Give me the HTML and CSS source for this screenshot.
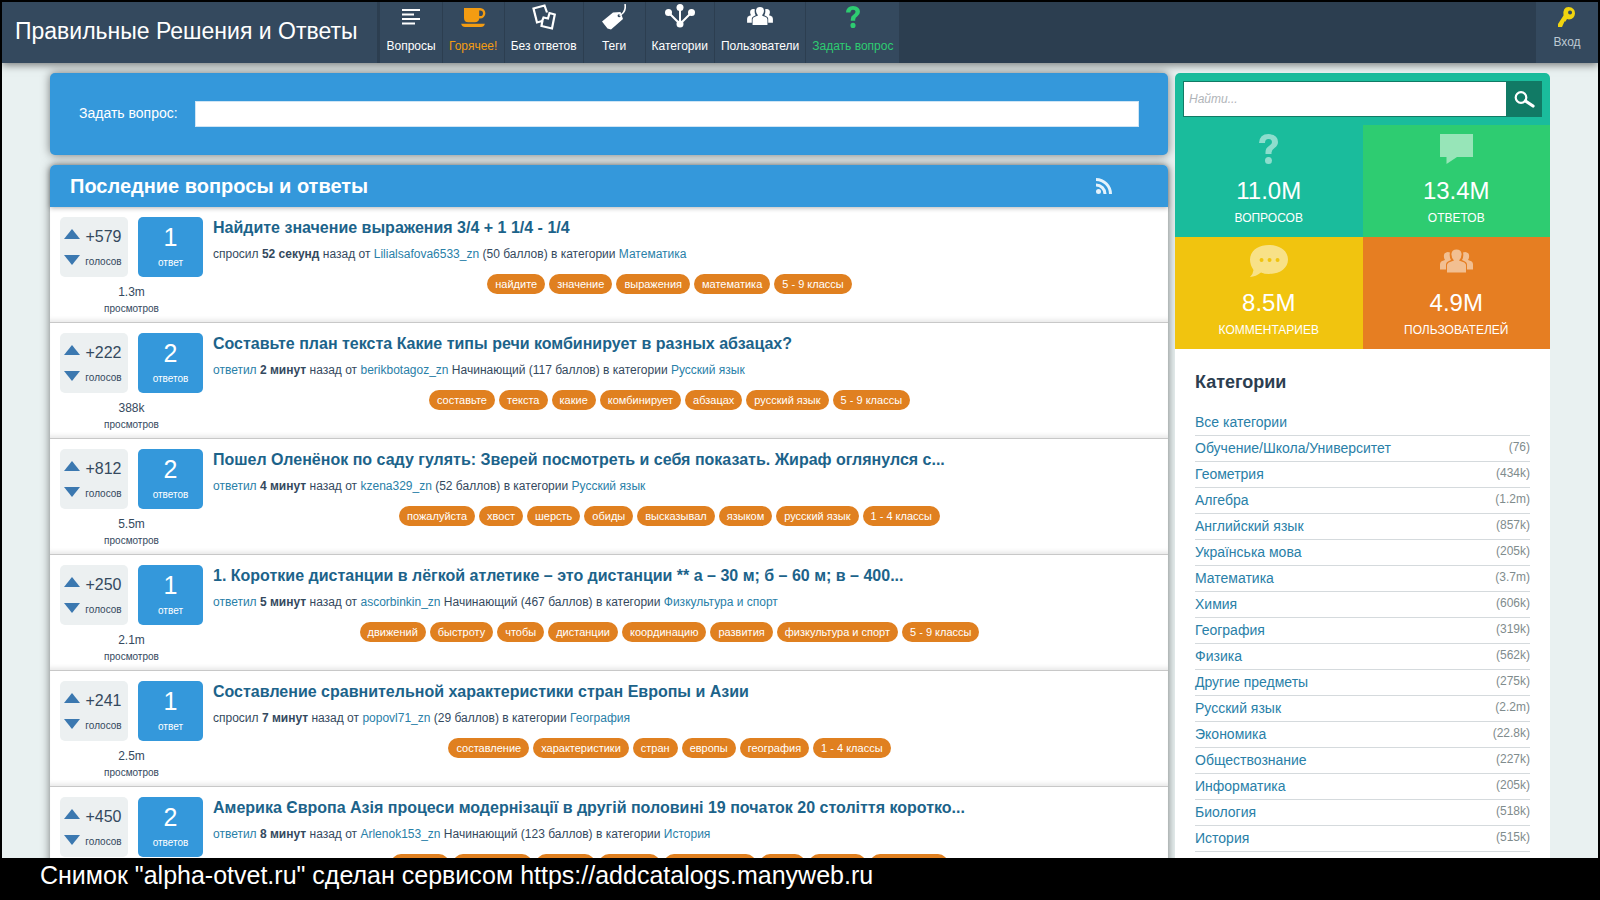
FILE: index.html
```html
<!DOCTYPE html>
<html lang="ru">
<head>
<meta charset="utf-8">
<title>Правильные Решения и Ответы</title>
<link rel="stylesheet" href="styles.css">
</head>
<body>
<svg class="sprite" aria-hidden="true">
  <symbol id="i-list" viewBox="0 0 18 16"><path d="M0 0h18v2H0zM0 4.500h12v2H0zM0 9h18v2H0zM0 13.500h13v2H0z"/></symbol>
  <symbol id="i-cup" viewBox="0 0 26 20"><path fill-rule="evenodd" d="M3 0h17a5.200 5.200 0 0 1 0 11h-1q-.5 4-4.500 4h-7Q3 15 3 10.500zM19 2.500v6h1a3 3 0 0 0 0-6z"/><path d="M0 16.500h25q-1 3.500-4 3.500H4q-3 0-4-3.500z"/></symbol>
  <symbol id="i-cards" viewBox="0 0 24 26"><g fill="none" stroke="currentColor" stroke-width="2.200"><path d="M15 8.500 12.500 1.500 1.500 4.500 5 18.500l6-1.700"/><path d="M10.500 16 9.500 22 20 24.500 22.800 10.500 17.500 9 16 14.500l-4.500-1z"/></g></symbol>
  <symbol id="i-tag" viewBox="0 0 24 26"><path fill-rule="evenodd" d="M11 8.500 18.500 8 21 15 9 25.500 5.500 24.500 0 17.500zM17 10.200a1.500 1.500 0 1 0 .1 3 1.500 1.500 0 0 0-.1-3z"/><path d="M17.500 11.500Q24.500 8 23 0" fill="none" stroke="currentColor" stroke-width="1.600"/></symbol>
  <symbol id="i-tree" viewBox="0 0 30 24"><circle cx="3.500" cy="8.500" r="3.500"/><circle cx="15" cy="3.500" r="3.500"/><circle cx="26.500" cy="8.500" r="3.500"/><circle cx="15" cy="20" r="3.500"/><path d="M15 3v17M4 9l11 11L26 9" fill="none" stroke="currentColor" stroke-width="2"/></symbol>
  <symbol id="i-users" viewBox="0 0 33 23"><path d="M0 20v-5q0-3 3-3.800L5 10.500Q3 7 4.500 4 7 1.500 10 3q-1 4 1 7.500L8 12q-2 1-2 3v5zM33 20v-5q0-3-3-3.800L28 10.500q2-3.500.5-6.500Q26 1.500 23 3q1 4-1 7.500L25 12q2 1 2 3v5z"/><path d="M7 23v-7q0-2.500 3-3.500l4-1.500q-3-3.500-2.500-7Q12 0 16.500 0t5 4q.5 3.500-2.500 7l4 1.500q3 1 3 3.500v7z"/></symbol>
  <symbol id="i-question" viewBox="0 0 19 30"><path d="M0 9Q.5 0 9.500 0 19 .5 19 8q0 3.500-3.500 6-3 2-3 4.500V20h-6v-2Q6.500 14 10 12q3-2 3-4 0-3-3.500-3T6 9zM9.500 23a3.500 3.500 0 1 1 0 7 3.500 3.500 0 0 1 0-7z"/></symbol>
  <symbol id="i-key" viewBox="0 0 18 20"><path fill-rule="evenodd" d="M10.500 0Q17 .5 17 6.500 16.500 12 11 12.500l-2-.5-1.500 2.500H6.500L4 20H0v-3l5.500-8.500Q4.500 0 10.500 0zm1.500 3.500a2 2 0 1 0 .1 4 2 2 0 0 0-.1-4z"/></symbol>
  <symbol id="i-search" viewBox="0 0 21 17"><circle cx="7" cy="6.500" r="5.300" fill="none" stroke="currentColor" stroke-width="2.200"/><path d="m11.500 10 7.500 5" fill="none" stroke="currentColor" stroke-width="3.200" stroke-linecap="round"/></symbol>
  <symbol id="i-bubble" viewBox="0 0 33 30"><path d="M0 0h33v23H17L6.500 30V23H0z"/></symbol>
  <symbol id="i-dots" viewBox="0 0 38 32"><path fill-rule="evenodd" d="M19 0C30 0 38 6 38 14.500S30 29 19 29q-4.500 0-8-1.500Q6 31.500 0 32q3-2.500 3.500-7Q0 20 0 14.500C0 6 8 0 19 0zm-7.500 13a2 2 0 1 0 .1 4 2 2 0 0 0-.1-4zM19.500 13a2 2 0 1 0 .1 4 2 2 0 0 0-.1-4zM27.500 13a2 2 0 1 0 .1 4 2 2 0 0 0-.1-4z"/></symbol>
  <symbol id="i-rss" viewBox="0 0 16 16"><circle cx="2.500" cy="13.500" r="2.500"/><path d="M0 7a9 9 0 0 1 9 9M0 1.500A14.500 14.500 0 0 1 14.500 16" fill="none" stroke="currentColor" stroke-width="3"/></symbol>
</svg>

<div class="shot">
  <header class="topbar">
    <a class="logo" href="#">Правильные Решения и Ответы</a>
    <nav class="nav">
      <a class="nav-item" href="#"><svg class="ico nav-list"><use href="#i-list"/></svg>Вопросы</a>
      <a class="nav-item hot" href="#"><svg class="ico nav-cup"><use href="#i-cup"/></svg>Горячее!</a>
      <a class="nav-item" href="#"><svg class="ico nav-cards"><use href="#i-cards"/></svg>Без ответов</a>
      <a class="nav-item" href="#"><svg class="ico nav-tag"><use href="#i-tag"/></svg>Теги</a>
      <a class="nav-item" href="#"><svg class="ico nav-tree"><use href="#i-tree"/></svg>Категории</a>
      <a class="nav-item" href="#"><svg class="ico nav-users"><use href="#i-users"/></svg>Пользователи</a>
      <a class="nav-item ask-link" href="#"><svg class="ico nav-question"><use href="#i-question"/></svg>Задать вопрос</a>
    </nav>
    <a class="login" href="#"><svg class="ico nav-key"><use href="#i-key"/></svg>Вход</a>
  </header>

  <div class="page">
    <main class="main">
      <form class="ask">
        <label for="ask">Задать вопрос:</label>
        <input id="ask" type="text">
      </form>
      <section class="feed">
        <div class="feed-head">
          <h1>Последние вопросы и ответы</h1>
          <a href="#" aria-label="RSS"><svg class="ico rss"><use href="#i-rss"/></svg></a>
        </div>

        <article class="q">
          <div class="stats">
            <div class="vote"><div class="arrows"><button class="up" aria-label="За"></button><button class="down" aria-label="Против"></button></div><div class="score"><b>+579</b><span>голосов</span></div></div>
            <div class="answers"><b>1</b><span>ответ</span></div>
            <div class="views"><b>1.3m</b><span>просмотров</span></div>
          </div>
          <div class="body">
            <h2><a href="#">Найдите значение выражения 3/4 + 1 1/4 - 1/4</a></h2>
            <p>спросил <b>52 секунд</b> назад от <a href="#">Lilialsafova6533_zn</a> (50 баллов) в категории <a href="#">Математика</a></p>
            <div class="tags"><a href="#">найдите</a><a href="#">значение</a><a href="#">выражения</a><a href="#">математика</a><a href="#">5 - 9 классы</a></div>
          </div>
        </article>

        <article class="q">
          <div class="stats">
            <div class="vote"><div class="arrows"><button class="up" aria-label="За"></button><button class="down" aria-label="Против"></button></div><div class="score"><b>+222</b><span>голосов</span></div></div>
            <div class="answers"><b>2</b><span>ответов</span></div>
            <div class="views"><b>388k</b><span>просмотров</span></div>
          </div>
          <div class="body">
            <h2><a href="#">Составьте план текста Какие типы речи комбинирует в разных абзацах?</a></h2>
            <p><a href="#">ответил</a> <b>2 минут</b> назад от <a href="#">berikbotagoz_zn</a> Начинающий (117 баллов) в категории <a href="#">Русский язык</a></p>
            <div class="tags"><a href="#">составьте</a><a href="#">текста</a><a href="#">какие</a><a href="#">комбинирует</a><a href="#">абзацах</a><a href="#">русский язык</a><a href="#">5 - 9 классы</a></div>
          </div>
        </article>

        <article class="q">
          <div class="stats">
            <div class="vote"><div class="arrows"><button class="up" aria-label="За"></button><button class="down" aria-label="Против"></button></div><div class="score"><b>+812</b><span>голосов</span></div></div>
            <div class="answers"><b>2</b><span>ответов</span></div>
            <div class="views"><b>5.5m</b><span>просмотров</span></div>
          </div>
          <div class="body">
            <h2><a href="#">Пошел Оленёнок по саду гулять: Зверей посмотреть и себя показать. Жираф оглянулся с...</a></h2>
            <p><a href="#">ответил</a> <b>4 минут</b> назад от <a href="#">kzena329_zn</a> (52 баллов) в категории <a href="#">Русский язык</a></p>
            <div class="tags"><a href="#">пожалуйста</a><a href="#">хвост</a><a href="#">шерсть</a><a href="#">обиды</a><a href="#">высказывал</a><a href="#">языком</a><a href="#">русский язык</a><a href="#">1 - 4 классы</a></div>
          </div>
        </article>

        <article class="q">
          <div class="stats">
            <div class="vote"><div class="arrows"><button class="up" aria-label="За"></button><button class="down" aria-label="Против"></button></div><div class="score"><b>+250</b><span>голосов</span></div></div>
            <div class="answers"><b>1</b><span>ответ</span></div>
            <div class="views"><b>2.1m</b><span>просмотров</span></div>
          </div>
          <div class="body">
            <h2><a href="#">1. Короткие дистанции в лёгкой атлетике – это дистанции ** а – 30 м; б – 60 м; в – 400...</a></h2>
            <p><a href="#">ответил</a> <b>5 минут</b> назад от <a href="#">ascorbinkin_zn</a> Начинающий (467 баллов) в категории <a href="#">Физкультура и спорт</a></p>
            <div class="tags"><a href="#">движений</a><a href="#">быстроту</a><a href="#">чтобы</a><a href="#">дистанции</a><a href="#">координацию</a><a href="#">развития</a><a href="#">физкультура и спорт</a><a href="#">5 - 9 классы</a></div>
          </div>
        </article>

        <article class="q">
          <div class="stats">
            <div class="vote"><div class="arrows"><button class="up" aria-label="За"></button><button class="down" aria-label="Против"></button></div><div class="score"><b>+241</b><span>голосов</span></div></div>
            <div class="answers"><b>1</b><span>ответ</span></div>
            <div class="views"><b>2.5m</b><span>просмотров</span></div>
          </div>
          <div class="body">
            <h2><a href="#">Составление сравнительной характеристики стран Европы и Азии</a></h2>
            <p>спросил <b>7 минут</b> назад от <a href="#">popovl71_zn</a> (29 баллов) в категории <a href="#">География</a></p>
            <div class="tags"><a href="#">составление</a><a href="#">характеристики</a><a href="#">стран</a><a href="#">европы</a><a href="#">география</a><a href="#">1 - 4 классы</a></div>
          </div>
        </article>

        <article class="q">
          <div class="stats">
            <div class="vote"><div class="arrows"><button class="up" aria-label="За"></button><button class="down" aria-label="Против"></button></div><div class="score"><b>+450</b><span>голосов</span></div></div>
            <div class="answers"><b>2</b><span>ответов</span></div>
          </div>
          <div class="body">
            <h2><a href="#">Америка Європа Азія процеси модернізації в другій половині 19 початок 20 століття коротко...</a></h2>
            <p><a href="#">ответил</a> <b>8 минут</b> назад от <a href="#">Arlenok153_zn</a> Начинающий (123 баллов) в категории <a href="#">История</a></p>
            <div class="tags"><i style="width:58px"></i><i style="width:79px"></i><i style="width:59px"></i><i style="width:61px"></i><i style="width:92px"></i><i style="width:45px"></i><i style="width:57px"></i><i style="width:78px"></i></div>
          </div>
        </article>
      </section>
    </main>

    <aside class="side">
      <form class="search">
        <input type="text" placeholder="Найти..." aria-label="Найти">
        <button type="button" aria-label="Найти"><svg class="ico find"><use href="#i-search"/></svg></button>
      </form>
      <div class="totals">
        <div class="total teal"><svg class="ico t-question"><use href="#i-question"/></svg><b>11.0M</b><span>ВОПРОСОВ</span></div>
        <div class="total green"><svg class="ico t-bubble"><use href="#i-bubble"/></svg><b>13.4M</b><span>ОТВЕТОВ</span></div>
        <div class="total yellow"><svg class="ico t-dots"><use href="#i-dots"/></svg><b>8.5M</b><span>КОММЕНТАРИЕВ</span></div>
        <div class="total orange"><svg class="ico t-users"><use href="#i-users"/></svg><b>4.9M</b><span>ПОЛЬЗОВАТЕЛЕЙ</span></div>
      </div>
      <section class="cats">
        <h2>Категории</h2>
        <ul>
          <li><a href="#">Все категории</a></li>
          <li><a href="#">Обучение/Школа/Университет</a><span>(76)</span></li>
          <li><a href="#">Геометрия</a><span>(434k)</span></li>
          <li><a href="#">Алгебра</a><span>(1.2m)</span></li>
          <li><a href="#">Английский язык</a><span>(857k)</span></li>
          <li><a href="#">Українська мова</a><span>(205k)</span></li>
          <li><a href="#">Математика</a><span>(3.7m)</span></li>
          <li><a href="#">Химия</a><span>(606k)</span></li>
          <li><a href="#">География</a><span>(319k)</span></li>
          <li><a href="#">Физика</a><span>(562k)</span></li>
          <li><a href="#">Другие предметы</a><span>(275k)</span></li>
          <li><a href="#">Русский язык</a><span>(2.2m)</span></li>
          <li><a href="#">Экономика</a><span>(22.8k)</span></li>
          <li><a href="#">Обществознание</a><span>(227k)</span></li>
          <li><a href="#">Информатика</a><span>(205k)</span></li>
          <li><a href="#">Биология</a><span>(518k)</span></li>
          <li><a href="#">История</a><span>(515k)</span></li>
        </ul>
      </section>
    </aside>
  </div>
</div>
<footer class="caption">Снимок "alpha-otvet.ru" сделан сервисом https://addcatalogs.manyweb.ru</footer>
</body>
</html>
```
FILE: styles.css
```css
* { box-sizing: border-box; }
body {
  margin: 0;
  height: 100vh;
  display: flex;
  flex-direction: column;
  overflow: hidden;
  background: #000;
  color: #34495e;
  font: 12px/16px "Liberation Sans", Arial, sans-serif;
}
h1, h2, p, ul { margin: 0; padding: 0; }
a { color: #2980a8; text-decoration: none; }
button { border: 0; padding: 0; background: none; cursor: pointer; }
.sprite { display: none; }
.ico { display: block; flex: none; fill: currentColor; }

.shot {
  flex: 1;
  min-height: 0;
  margin: 2px 2px 0;
  overflow: hidden;
  background: #e9f1f1;
}
.caption {
  flex: none;
  height: 42px;
  padding-left: 40px;
  color: #fff;
  font-size: 25px;
  line-height: 34px;
}

/* top bar */
.topbar {
  position: relative;
  display: flex;
  height: 61px;
  background: #2c3e50;
  box-shadow: 0 2px 8px rgba(0, 0, 0, .5);
}
.logo {
  padding: 0 20px 0 13px;
  background: #34495e;
  border-right: 3px solid #2c3e50;
  color: #fff;
  font-size: 23px;
  line-height: 58px;
}
.nav { display: flex; }
.nav-item, .login {
  display: flex;
  flex-direction: column;
  align-items: center;
  min-width: 62px;
  padding: 0 6px;
  background: #34495e;
  border-right: 1px solid #2c3e50;
  color: #fff;
}
.hot { color: #f39c12; }
.ask-link { color: #2ecc71; }
.nav-list { width: 18px; height: 36px; padding: 7px 0 13px; }
.nav-cup { width: 25px; height: 36px; padding: 6px 0 11px; }
.nav-cards { width: 24px; height: 36px; padding: 2px 0 8px; }
.nav-tag { width: 24px; height: 36px; padding: 2px 0 8px; }
.nav-tree { width: 30px; height: 36px; padding: 2px 0 10px; }
.nav-users { width: 26px; height: 36px; padding: 5px 0 13px; }
.nav-question { width: 16px; height: 36px; padding: 4px 0 10px; }
.login { margin-left: auto; color: #bdc9d3; border: 0; }
.nav-key { width: 18px; height: 32px; padding: 5px 0 7px; color: #f1d40f; }

/* columns */
.page {
  display: grid;
  grid-template-columns: 1fr 25%;
  column-gap: 7px;
  max-width: 1500px;
  margin: 0 auto;
  padding-top: 10px;
}
.ask {
  display: flex;
  align-items: center;
  gap: 17px;
  height: 82px;
  margin-bottom: 10px;
  padding: 0 29px;
  background: #3498db;
  border-radius: 5px;
  box-shadow: 0 0 10px rgba(0, 0, 0, .5);
  color: #fff;
  font-size: 14px;
}
.ask label { padding-bottom: 2px; }
.ask input {
  flex: 1;
  height: 26px;
  border: 1px solid #cfe5f5;
  background: #fff;
}
.feed {
  border-radius: 5px 5px 0 0;
  background: #fff;
  box-shadow: 0 0 10px rgba(0, 0, 0, .5);
}
.feed-head {
  position: relative;
  display: flex;
  align-items: center;
  justify-content: space-between;
  height: 42px;
  padding: 0 56px 0 20px;
  background: #3498db;
  border-radius: 5px 5px 0 0;
  box-shadow: 0 1px 5px rgba(0, 0, 0, .3);
  color: #fff;
}
.feed-head h1 { font-size: 20px; line-height: 24px; }
.feed-head a { color: #e4f2fb; }
.rss { width: 16px; height: 16px; }

/* question rows */
.q {
  display: flex;
  gap: 10px;
  height: 116px;
  padding: 10px;
  border-bottom: 1px solid #c8c8c8;
  box-shadow: inset 0 -5px 5px -3px rgba(0, 0, 0, .1);
}
.stats {
  flex: none;
  display: grid;
  grid-template-columns: 68px 65px;
  grid-template-rows: 60px auto;
  column-gap: 10px;
}
.vote {
  display: flex;
  align-items: center;
  gap: 3px;
  padding: 0 4px;
  background: #ecf0f1;
  border-radius: 5px;
}
.arrows { display: flex; flex-direction: column; gap: 16px; }
.up, .down { width: 16px; height: 10px; background: #3b78b0; }
.up { clip-path: polygon(50% 0, 100% 100%, 0 100%); }
.down { clip-path: polygon(0 0, 100% 0, 50% 100%); }
.score, .answers, .views { display: flex; flex-direction: column; align-items: center; }
.score { flex: 1; padding-top: 1px; }
.score b { font-size: 16px; font-weight: 400; line-height: 28px; }
.score span { font-size: 10px; line-height: 22px; }
.answers {
  background: #3498db;
  border-radius: 5px;
  color: #fff;
}
.answers b { font-size: 25px; font-weight: 400; line-height: 40px; }
.answers span { font-size: 10px; line-height: 12px; }
.views { grid-column: 1 / 3; padding-top: 7px; }
.views b { font-weight: 400; }
.views span { font-size: 10px; line-height: 18px; }
.body { flex: 1; min-width: 0; }
.body h2 { font-size: 16px; line-height: 22px; }
.body h2 a { color: #1c638a; }
.body p { margin: 7px 0 12px; }
.tags {
  display: flex;
  justify-content: center;
  gap: 4px;
  padding-right: 32px;
}
.tags a, .tags i {
  height: 20px;
  background: #e08020;
  border-radius: 10px;
}
.tags a {
  padding: 0 8px;
  color: #fff;
  font-size: 11px;
  line-height: 20px;
}

/* sidebar */
.side { background: #fff; border-radius: 5px 5px 0 0; align-self: start; }
.search {
  display: flex;
  padding: 8px;
  background: #1abc9c;
  border-radius: 5px 5px 0 0;
}
.search input {
  flex: 1;
  min-width: 0;
  height: 36px;
  padding: 0 5px;
  border: 1px solid #117a65;
  border-right: 0;
  font: italic 12px/16px "Liberation Sans", Arial, sans-serif;
}
.search input::placeholder { color: #b0b4b8; }
.search button {
  display: grid;
  place-items: center;
  width: 36px;
  background: #117a65;
  color: #fff;
}
.find { width: 21px; height: 17px; }
.totals { display: grid; grid-template-columns: 1fr 1fr; }
.total {
  display: flex;
  flex-direction: column;
  align-items: center;
  height: 112px;
  color: #fff;
}
.total .ico { height: 48px; padding: 8px 0; opacity: .5; }
.total b { font-size: 24px; font-weight: 400; line-height: 36px; }
.total span { line-height: 18px; }
.teal { background: #1abc9c; }
.green { background: #2ecc71; }
.yellow { background: #f1c40f; }
.orange { background: #e67e22; }
.t-question { width: 19px; }
.t-bubble { width: 33px; }
.t-dots { width: 38px; }
.t-users { width: 33px; }
.cats { padding: 22px 20px; }
.cats h2 { margin-bottom: 17px; font-size: 18px; line-height: 22px; color: #2c3e50; }
.cats ul { list-style: none; }
.cats li {
  display: flex;
  justify-content: space-between;
  height: 26px;
  border-bottom: 1px solid #d5dadd;
  font-size: 14px;
  line-height: 25px;
}
.cats span { color: #7f8c8d; font-size: 12px; line-height: 23px; }
```
